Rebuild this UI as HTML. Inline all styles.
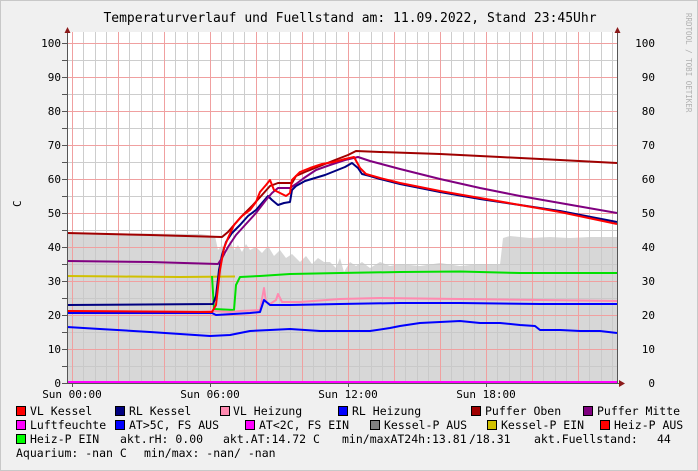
<!DOCTYPE html>
<html><head><meta charset="utf-8"><style>
html,body{margin:0;padding:0;background:#f0f0f0;}
svg{display:block;}
text{font-family:"DejaVu Sans Mono","Liberation Mono",monospace;fill:#000;}
</style></head><body>
<svg width="698" height="471" viewBox="0 0 698 471" xmlns="http://www.w3.org/2000/svg">
<rect x="0" y="0" width="698" height="471" fill="#f0f0f0"/>
<rect x="0.5" y="0.5" width="697" height="470" fill="none" stroke="#c8c8c8"/>
<rect x="67" y="32" width="550" height="351" fill="#fff"/>
<!-- grey fill -->
<path fill="#d7d7d7" d="M67,383 L67,233 L200,234 L215,236 L218,250 L222,245 L226,255 L230,240 L234,250 L238,245 L242,252 L246,244 L250,250 L256,247 L262,253 L268,246 L274,256 L280,250 L286,258 L292,254 L300,262 L306,256 L312,264 L318,258 L324,262 L330,262 L336,268 L340,258 L344,272 L350,262 L356,266 L362,262 L370,268 L380,262 L390,266 L400,264 L420,266 L440,263 L460,266 L480,264 L500,265 L503,238 L510,236 L530,238 L550,237 L570,238 L590,237 L617,237 L617,383 Z"/>
<!-- minor grid -->
<g stroke="#c8c8c8" stroke-width="1" fill="none" opacity="0.9">
<path d="M67,366.5H617M67,332.5H617M67,298.5H617M67,264.5H617M67,230.5H617M67,196.5H617M67,162.5H617M67,128.5H617M67,94.5H617M67,60.5H617"/>
<path id="vm" d="M83.5,32V383M95.5,32V383M106.5,32V383M129.5,32V383M141.5,32V383M152.5,32V383M175.5,32V383M187.5,32V383M198.5,32V383M221.5,32V383M233.5,32V383M244.5,32V383M267.5,32V383M279.5,32V383M290.5,32V383M313.5,32V383M325.5,32V383M336.5,32V383M359.5,32V383M371.5,32V383M382.5,32V383M405.5,32V383M417.5,32V383M428.5,32V383M451.5,32V383M463.5,32V383M474.5,32V383M497.5,32V383M509.5,32V383M520.5,32V383M543.5,32V383M555.5,32V383M566.5,32V383M589.5,32V383M601.5,32V383M612.5,32V383"/>
</g>
<g stroke="#f0a0a0" stroke-width="1" fill="none">
<path d="M67,349.5H617M67,315.5H617M67,281.5H617M67,247.5H617M67,213.5H617M67,179.5H617M67,145.5H617M67,111.5H617M67,77.5H617M67,43.5H617"/>
<path d="M72.5,32V383M118.5,32V383M164.5,32V383M210.5,32V383M256.5,32V383M302.5,32V383M348.5,32V383M394.5,32V383M440.5,32V383M486.5,32V383M532.5,32V383M578.5,32V383"/>
</g>
<!-- lines -->
<g fill="none" stroke-width="2" stroke-linejoin="round">
<path stroke="#0000ff" d="M67,327 L100,329 L150,332 L180,334 L210,336 L230,335 L250,331 L270,330 L290,329 L320,331 L350,331 L370,331 L390,328 L400,326 L420,323 L440,322 L460,321 L480,323 L500,323 L520,325 L535,326 L540,330 L560,330 L580,331 L600,331 L617,333"/>
<path stroke="#d0c000" d="M67,276 L120,276.5 L180,277 L235,276.5"/>
<path stroke="#00e000" d="M212,276 L214,309 L234,310 L236,285 L240,277 L260,276 L290,274 L340,273 L400,272 L460,271.5 L520,273 L617,273"/>
<path stroke="#ff8ab0" d="M67,311 L200,312 L212,311 L230,312 L240,311 L260,310 L264,288 L266,302 L270,304 L276,300 L278,294 L282,302 L300,302 L340,299 L380,298 L460,299 L540,300 L617,301"/>
<path stroke="#0000ff" d="M67,313 L212,313 L216,315 L250,313 L260,312 L264,300 L270,305 L290,305 L340,304 L400,303 L460,303 L540,304 L617,304"/>
<path stroke="#000080" d="M67,305 L213,304 L216,296 L219,270 L222,255 L226,242 L232,233 L240,225 L248,216 L256,210 L262,203 L268,196 L272,200 L278,205 L284,203 L290,202 L292,190 L296,186 L305,181 L315,178 L325,175 L335,171 L345,167 L352,163 L358,168 L362,174 L370,176 L380,179 L400,184 L440,192 L480,199 L520,205 L560,211 L617,222"/>
<path stroke="#800080" d="M67,261 L150,262 L218,264 L222,258 L228,247 L236,235 L246,224 L256,213 L266,200 L272,193 L278,188 L290,188 L296,184 L304,178 L316,170 L330,165 L345,160 L358,157 L370,161 L400,169 L440,179 L480,188 L520,196 L560,203 L617,213"/>
<path stroke="#a00000" d="M67,233 L150,235 L222,237 L228,232 L240,218 L252,206 L262,195 L270,186 L278,183 L292,183 L296,176 L305,172 L320,166 L335,160 L348,155 L356,151 L380,152 L440,154 L500,157 L560,160 L617,163"/>
<path stroke="#ff0000" d="M67,311 L212,312 L216,305 L220,270 L224,248 L228,238 L234,225 L242,216 L250,210 L256,202 L260,192 L266,185 L270,180 L274,190 L280,193 L286,196 L290,193 L292,180 L300,172 L310,168 L322,164 L334,162 L345,159 L354,157 L360,168 L366,174 L380,178 L400,183 L440,191 L480,198 L520,205 L560,212 L617,224"/>
<path stroke="#ff00ff" d="M67,382 L617,382"/>
</g>
<!-- axes -->
<g stroke="#555" stroke-width="1" fill="none">
<path d="M67.5,30V383M617.5,30V383M62,383.5H622"/>
<path d="M62,366.5h5M62,349.5h5M62,332.5h5M62,315.5h5M62,298.5h5M62,281.5h5M62,264.5h5M62,247.5h5M62,230.5h5M62,213.5h5M62,196.5h5M62,179.5h5M62,162.5h5M62,145.5h5M62,128.5h5M62,111.5h5M62,94.5h5M62,77.5h5M62,60.5h5M62,43.5h5"/>
<path d="M72.5,383v4M210.5,383v4M348.5,383v4M486.5,383v4"/>
</g>
<g fill="#8b1a1a">
<path d="M64.5,33 L67.5,27 L70.5,33Z"/>
<path d="M614.5,33 L617.5,27 L620.5,33Z"/>
<path d="M619,380 L625,383.5 L619,387Z"/>
</g>
<!-- title -->
<text x="350" y="22" font-size="13" text-anchor="middle">Temperaturverlauf und Fuellstand am: 11.09.2022, Stand 23:45Uhr</text>
<text x="692" y="7" font-size="7.5" fill="#b0b0b0" style="fill:#b0b0b0" transform="rotate(90 686 7)">RRDTOOL / TOBI OETIKER</text>
<text x="18" y="210" font-size="11" transform="rotate(-90 18 207)">C</text>
<!-- y labels -->
<g font-size="11" text-anchor="end">
<text x="61" y="47">100</text><text x="61" y="81">90</text><text x="61" y="115">80</text><text x="61" y="149">70</text><text x="61" y="183">60</text><text x="61" y="217">50</text><text x="61" y="251">40</text><text x="61" y="285">30</text><text x="61" y="319">20</text><text x="61" y="353">10</text><text x="61" y="387">0</text>
<text x="655" y="47">100</text><text x="655" y="81">90</text><text x="655" y="115">80</text><text x="655" y="149">70</text><text x="655" y="183">60</text><text x="655" y="217">50</text><text x="655" y="251">40</text><text x="655" y="285">30</text><text x="655" y="319">20</text><text x="655" y="353">10</text><text x="655" y="387">0</text>
</g>
<g font-size="11" text-anchor="middle">
<text x="72" y="398">Sun 00:00</text><text x="210" y="398">Sun 06:00</text><text x="348" y="398">Sun 12:00</text><text x="486" y="398">Sun 18:00</text>
</g>
<!-- legend -->
<g stroke="#000" stroke-width="1">
<rect x="16.5" y="406.5" width="9" height="9" fill="#ff0000"/>
<rect x="115.5" y="406.5" width="9" height="9" fill="#000080"/>
<rect x="220.5" y="406.5" width="9" height="9" fill="#ff8ab0"/>
<rect x="338.5" y="406.5" width="9" height="9" fill="#0000ff"/>
<rect x="471.5" y="406.5" width="9" height="9" fill="#a00000"/>
<rect x="583.5" y="406.5" width="9" height="9" fill="#800080"/>
<rect x="16.5" y="420.5" width="9" height="9" fill="#ff00ff"/>
<rect x="115.5" y="420.5" width="9" height="9" fill="#0000ff"/>
<rect x="245.5" y="420.5" width="9" height="9" fill="#ff00ff"/>
<rect x="370.5" y="420.5" width="9" height="9" fill="#808080"/>
<rect x="487.5" y="420.5" width="9" height="9" fill="#d0c000"/>
<rect x="600.5" y="420.5" width="9" height="9" fill="#ff0000"/>
<rect x="16.5" y="434.5" width="9" height="9" fill="#00ff00"/>
</g>
<g font-size="11.5">
<text x="30" y="415">VL Kessel</text><text x="129" y="415">RL Kessel</text><text x="233" y="415">VL Heizung</text><text x="352" y="415">RL Heizung</text><text x="485" y="415">Puffer Oben</text><text x="597" y="415">Puffer Mitte</text>
<text x="30" y="429">Luftfeuchte</text><text x="129" y="429">AT&gt;5C, FS AUS</text><text x="259" y="429">AT&lt;2C, FS EIN</text><text x="384" y="429">Kessel-P AUS</text><text x="501" y="429">Kessel-P EIN</text><text x="614" y="429">Heiz-P AUS</text>
<text x="30" y="443">Heiz-P EIN</text><text x="120" y="443">akt.rH: 0.00</text><text x="223" y="443">akt.AT:14.72 C</text><text x="342" y="443">min/maxAT24h:13.81</text><text x="469" y="443">/18.31</text><text x="534" y="443">akt.Fuellstand:</text><text x="657" y="443">44</text>
<text x="16" y="457">Aquarium: -nan C</text><text x="144" y="457">min/max: -nan/ -nan</text>
</g>
</svg>
</body></html>
